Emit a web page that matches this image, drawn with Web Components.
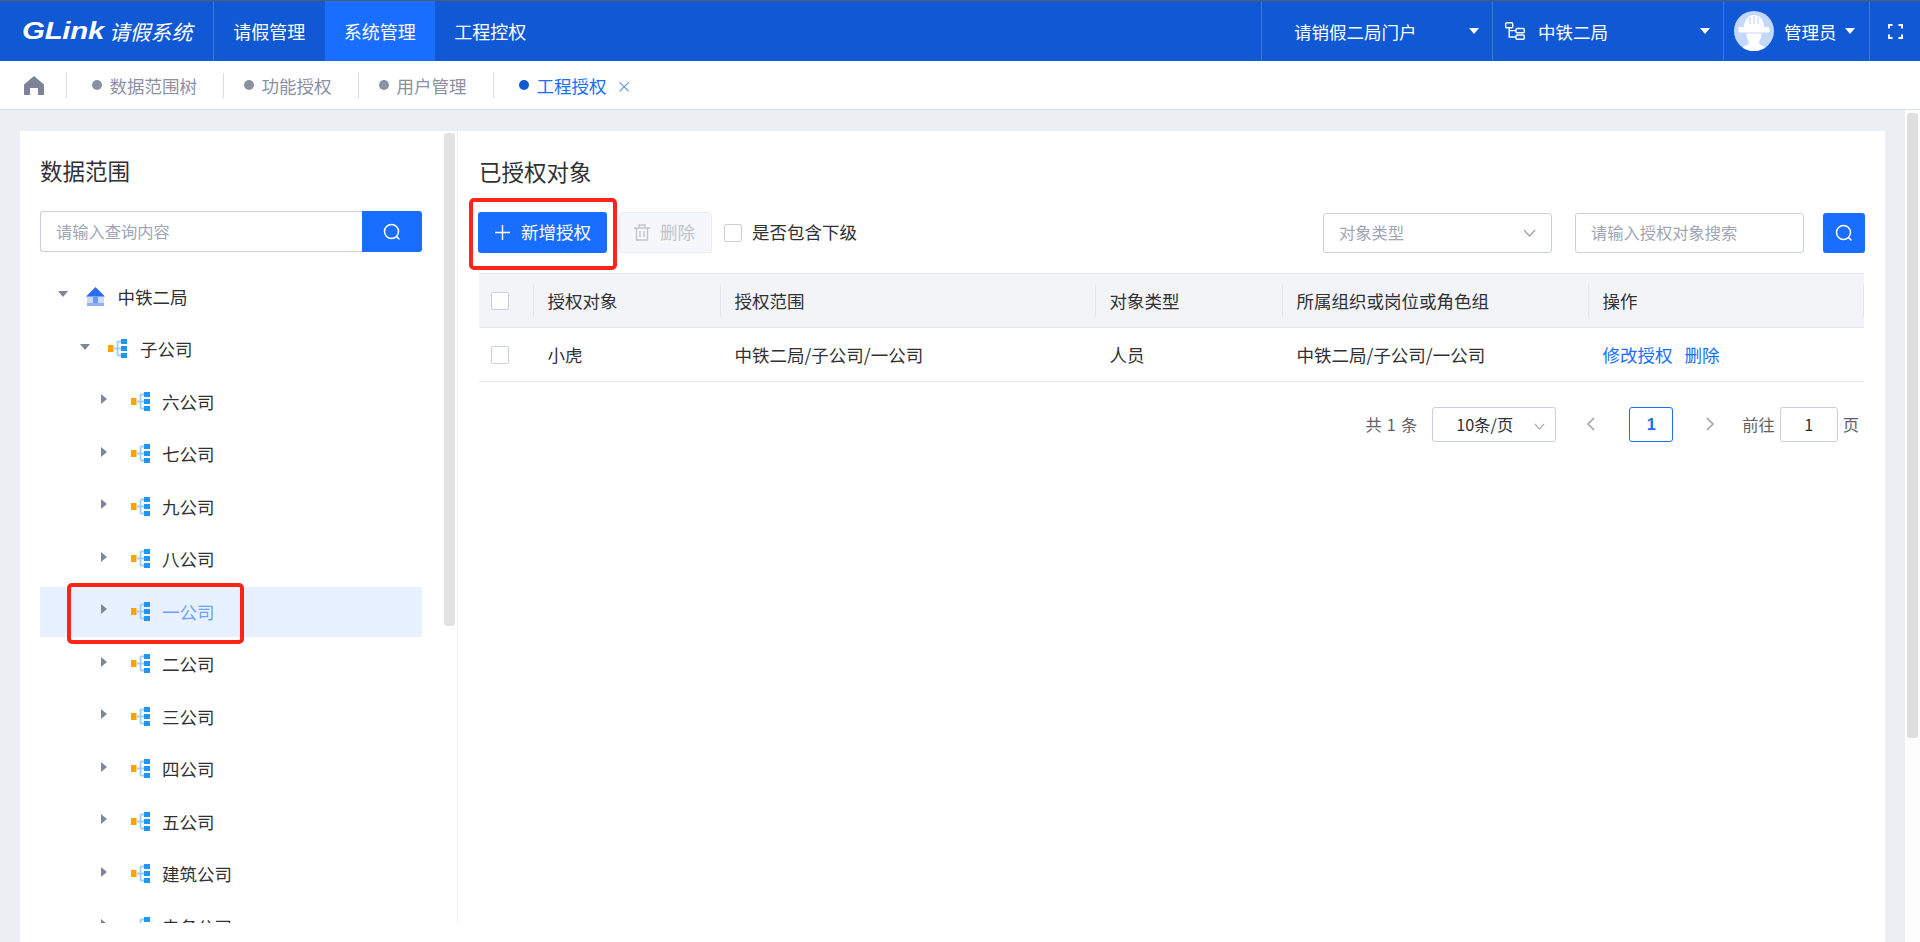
<!DOCTYPE html>
<html lang="zh">
<head>
<meta charset="utf-8">
<title>GLink 请假系统</title>
<style>
    html, body { margin: 0; padding: 0; height: 942px; overflow: hidden; }
    body {
        font-family: "Noto Sans CJK SC", "Noto Sans", sans-serif;
        font-size: 17.5px;
        color: #303133;
        background: #ebeff3;
    }
</style>
</head>
<body>
<app-shell>
    <app-header></app-header>
    <tab-bar></tab-bar>
    <page-body>
        <main-card>
            <scope-pane slot="left"></scope-pane>
            <grant-pane slot="right"></grant-pane>
        </main-card>
    </page-body>
</app-shell>

<script>
const ORG_ICON = `<svg width="19" height="19" viewBox="0 0 19 19">
    <path d="M6 9.5H13M9.5 2.5V16.5M9.5 2.5H13M9.5 16.5H13" fill="none" stroke="#9ccfff" stroke-width="1.8"/>
    <rect x="0" y="6" width="5.5" height="7" fill="#ffa200"/>
    <rect x="13" y="0" width="6" height="5" fill="#1f96fb"/>
    <rect x="13" y="7" width="6" height="5" fill="#1f96fb"/>
    <rect x="13" y="14" width="6" height="5" fill="#1f96fb"/>
</svg>`;

const HOME_ICON = `<svg width="19" height="19" viewBox="0 0 19 19">
    <rect x="1" y="9" width="17" height="10" fill="#cddbfb"/>
    <rect x="7" y="10" width="5" height="7" fill="#6f98f4"/>
    <rect x="1" y="16" width="17" height="3" fill="#8fb0f7"/>
    <path d="M9.5 0L19 9.5H0Z" fill="#2a6cf0"/>
</svg>`;

const SEARCH_ICON = `<svg width="18" height="18" viewBox="0 0 18 18" fill="none" stroke="#fff" stroke-width="1.5">
    <circle cx="8.5" cy="8.5" r="7"/><path d="M13.6 13.6L16 16" stroke-linecap="round"/>
</svg>`;

const CHEVRON_DOWN = `<svg width="13" height="8" viewBox="0 0 13 8" fill="none" stroke="#9aa0ae" stroke-width="1.2"><path d="M1 1L6.5 7L12 1"/></svg>`;

class AppShell extends HTMLElement {
    constructor() {
        super();
        this.attachShadow({ mode: 'open' });
        this.shadowRoot.innerHTML = `
            <style>
                :host { display: flex; flex-direction: column; height: 942px; overflow: hidden; position: relative; }
            </style>
            <slot></slot>
        `;
    }
}

class AppHeader extends HTMLElement {
    constructor() {
        super();
        this.attachShadow({ mode: 'open' });
        const caret = '<span class="caret"></span>';
        this.shadowRoot.innerHTML = `
            <style>
                :host { display: flex; height: 60px; flex: none; background: #1158d4; color: #fff; border-top: 1px solid #555a66; font-size: 17.5px; }
                .logo { width: 191px; padding-left: 22px; border-right: 1px solid #3f78dc; display: flex; align-items: center; white-space: nowrap; }
                .logo b { font: italic 900 24.5px "Liberation Sans", sans-serif; display: inline-block; width: 81px; letter-spacing: -.2px; transform: scaleX(1.2); transform-origin: left center; }
                .logo i { font-size: 20.8px; margin-left: 6px; }
                .nav { width: 110.5px; font-size: 18px; display: flex; align-items: center; justify-content: center; }
                .nav.on { background: #1a6eff; }
                .spacer { flex: 1; }
                .cell { display: flex; align-items: center; border-left: 1px solid #3f78dc; white-space: nowrap; box-sizing: border-box; }
                .caret { width: 0; height: 0; border-left: 5.5px solid transparent; border-right: 5.5px solid transparent; border-top: 6.5px solid #fff; }
                .portal { width: 231px; padding-left: 32px; }
                .portal span:first-child { width: 175px; }
                .corp { width: 231px; padding-left: 12px; }
                .corp svg { margin-right: 13px; }
                .corp span:nth-child(2) { width: 162px; }
                .user { width: 146px; padding-left: 10px; }
                .user svg { margin-right: 10px; }
                .user .caret { margin-left: 8px; }
                .full { width: 51px; padding-left: 18px; }
            </style>
            <div class="logo"><b>GLink</b><i>请假系统</i></div>
            <div class="nav">请假管理</div>
            <div class="nav on">系统管理</div>
            <div class="nav">工程控权</div>
            <div class="spacer"></div>
            <div class="cell portal"><span>请销假二局门户</span>${caret}</div>
            <div class="cell corp">
                <svg width="20" height="18" viewBox="0 0 20 18" fill="none" stroke="#fff" stroke-width="1.4">
                    <rect x=".7" y=".7" width="7" height="5" rx="1"/><rect x="11" y="6.5" width="8.3" height="4.2" rx="1"/><rect x="11" y="13" width="8.3" height="4.2" rx="1"/>
                    <path d="M4.2 5.7V15H11M4.2 8.6H11"/>
                </svg>
                <span>中铁二局</span>${caret}
            </div>
            <div class="cell user">
                <svg width="40" height="40" viewBox="0 0 40 40">
                    <clipPath id="round"><circle cx="20" cy="20" r="20"/></clipPath>
                    <circle cx="20" cy="20" r="20" fill="#c4d8fd"/>
                    <g clip-path="url(#round)" fill="#fff">
                        <path d="M10 16C10 9 14 4 20 4C26 4 30 9 30 16Z"/>
                        <rect x="4.5" y="16" width="31" height="5.5" rx="1.5"/>
                        <path d="M12.5 22.5H27.5C27.5 28 25 30 25 32C25 34 32 35 34 40H6C8 35 15 34 15 32C15 30 12.5 28 12.5 22.5Z"/>
                    </g>
                    <path d="M16 6V13M20 5V13M24 6V13" stroke="#c4d8fd" stroke-width="1.2"/>
                </svg>
                <span>管理员</span>${caret}
            </div>
            <div class="cell full">
                <svg width="15" height="15" viewBox="0 0 15 15" fill="none" stroke="#fff" stroke-width="2">
                    <path d="M1 4.5V1H4.5M10.5 1H14V4.5M14 10.5V14H10.5M4.5 14H1V10.5"/>
                </svg>
            </div>
        `;
    }
}

class TabBar extends HTMLElement {
    constructor() {
        super();
        this.attachShadow({ mode: 'open' });
        const tabs = [
            { label: '数据范围树', width: 157, pad: 25 },
            { label: '功能授权', width: 135, pad: 20 },
            { label: '用户管理', width: 135, pad: 20 },
            { label: '工程授权', pad: 25, active: true }
        ];
        this.shadowRoot.innerHTML = `
            <style>
                :host { display: flex; align-items: center; height: 48px; flex: none; background: #fff; border-bottom: 1px solid #d8dce5; color: #8a91a3; font-size: 17.5px; white-space: nowrap; }
                .home { width: 66px; padding-left: 24px; box-sizing: border-box; display: flex; }
                .tab { display: flex; align-items: center; height: 25px; border-left: 1px solid #d8dce5; box-sizing: border-box; }
                .dot { width: 10px; height: 10px; border-radius: 50%; background: #8a91a3; margin-right: 7.5px; }
                .tab.on { color: #1a6eff; }
                .tab.on .dot { background: #1158d4; }
                .x { margin-left: 10px; font-size: 15px; color: #5d8de6; }
            </style>
            <div class="home">
                <svg width="20" height="19" viewBox="0 0 20 19"><path d="M10 0L20 8.5V19H14V12H6V19H0V8.5Z" fill="#7d8497"/></svg>
            </div>
            ${tabs.map(t => `
                <div class="tab ${t.active ? 'on' : ''}" style="padding-left:${t.pad}px;${t.width ? `width:${t.width}px` : ''}">
                    <span class="dot"></span><span>${t.label}</span>${t.active ? '<span class="x">×</span>' : ''}
                </div>
            `).join('')}
        `;
    }
}

class PageBody extends HTMLElement {
    constructor() {
        super();
        this.attachShadow({ mode: 'open' });
        this.shadowRoot.innerHTML = `
            <style>
                :host { display: flex; flex: 1; min-height: 0; }
                .content { flex: 1; padding: 21px 20px 0; min-width: 0; display: flex; }
                .bar { width: 15px; flex: none; background: #fdfdfd; box-sizing: border-box; padding: 3px 2px 0; }
                .thumb { height: 625px; background: #dedede; border-radius: 3px; }
            </style>
            <div class="content"><slot></slot></div>
            <div class="bar"><div class="thumb"></div></div>
        `;
    }
}

class MainCard extends HTMLElement {
    constructor() {
        super();
        this.attachShadow({ mode: 'open' });
        this.shadowRoot.innerHTML = `
            <style>
                :host { display: flex; flex: 1; background: #fff; min-width: 0; align-items: flex-start; }
            </style>
            <slot name="left"></slot>
            <slot name="right"></slot>
        `;
    }
}

class TreeRow extends HTMLElement {
    constructor() {
        super();
        this.attachShadow({ mode: 'open' });
    }

    connectedCallback() {
        const level = Number(this.getAttribute('level') || 0);
        const open = this.hasAttribute('open');
        const active = this.hasAttribute('active');
        this.shadowRoot.innerHTML = `
            <style>
                :host { display: flex; align-items: center; height: 52.5px; flex: none; }
                .row { flex: 1; height: 50px; display: flex; align-items: center; box-sizing: border-box; padding: 0 0 2px ${16 + level * 22}px; }
                .row.on { background: #e7f1ff; color: #6ba2fb; }
                .arrow { width: ${level === 2 ? 31 : 30}px; flex: none; display: flex; transform: translateY(-2px); }
                .down { margin-left: 2px; width: 0; height: 0; border-left: 5px solid transparent; border-right: 5px solid transparent; border-top: 6px solid #808797; }
                .right { margin-left: 1px; width: 0; height: 0; border-top: 5px solid transparent; border-bottom: 5px solid transparent; border-left: 6.5px solid #808797; }
                svg { flex: none; margin-right: ${level === 0 ? 12.5 : level === 1 ? 13 : 12}px; }
            </style>
            <div class="row ${active ? 'on' : ''}">
                <span class="arrow"><span class="${open ? 'down' : 'right'}"></span></span>
                ${level === 0 ? HOME_ICON : ORG_ICON}
                <slot></slot>
            </div>
        `;
    }
}

class ScopePane extends HTMLElement {
    constructor() {
        super();
        this.attachShadow({ mode: 'open' });
        const names = ['六公司', '七公司', '九公司', '八公司', '一公司', '二公司', '三公司', '四公司', '五公司', '建筑公司', '电务公司'];
        this.shadowRoot.innerHTML = `
            <style>
                :host { display: block; position: relative; width: 438px; height: 792px; flex: none; box-sizing: border-box; padding: 24px 35px 0 20px; border-right: 1px solid #f0f0f0; overflow: hidden; }
                h2 { margin: 0; font-size: 22.5px; font-weight: 400; line-height: 30px; color: #303133; }
                .search { display: flex; height: 41px; margin: 26px 0 19px; }
                .search div { flex: 1; box-sizing: border-box; border: 1px solid #c9cfdc; border-right: 0; border-radius: 3px 0 0 3px; padding-left: 15px; color: #a0a6b5; font-size: 16.25px; line-height: 38px; }
                .search button { width: 60px; border: 0; padding: 0; background: #1a6eff; border-radius: 0 3px 3px 0; display: flex; align-items: center; justify-content: center; }
                .thumb { position: absolute; left: 424px; top: 2px; width: 11px; height: 493px; background: #e2e2e2; border-radius: 3px; }
            </style>
            <h2>数据范围</h2>
            <div class="search"><div>请输入查询内容</div><button>${SEARCH_ICON}</button></div>
            <tree-row level="0" open>中铁二局</tree-row>
            <tree-row level="1" open>子公司</tree-row>
            ${names.map(n => `<tree-row level="2" ${n === '一公司' ? 'active' : ''}>${n}</tree-row>`).join('')}
            <div class="thumb"></div>
        `;
    }
}

class CheckBox extends HTMLElement {
    constructor() {
        super();
        this.attachShadow({ mode: 'open' });
        this.shadowRoot.innerHTML = `
            <style>
                :host { display: block; width: 18px; height: 18px; box-sizing: border-box; border: 1px solid #c9cfdc; border-radius: 2px; background: #fff; flex: none; }
            </style>
        `;
    }
}

class GrantPane extends HTMLElement {
    constructor() {
        super();
        this.attachShadow({ mode: 'open' });
        this.shadowRoot.innerHTML = `
            <style>
                :host { display: block; flex: 1; min-width: 0; box-sizing: border-box; padding: 25px 20px 0 21px; font-size: 17.5px; }
                h2 { margin: 0; font-size: 22.5px; font-weight: 400; line-height: 30px; color: #303133; }
                .tools { display: flex; align-items: center; height: 41px; margin: 26px 0 20px -1px; white-space: nowrap; }
                .t { margin-bottom: 2px; }
                .btn { height: 41px; box-sizing: border-box; border-radius: 3px; display: flex; align-items: center; }
                .add { width: 129px; background: #1a6eff; color: #fff; padding-left: 17px; }
                .add svg { margin-right: 11px; }
                .del { width: 93px; margin-left: 12px; background: #f5f7fa; border: 1px solid #e9ecf2; color: #c0c4cc; padding-left: 14px; }
                .del svg { margin-right: 10px; }
                .chk { display: flex; align-items: center; gap: 10px; margin-left: 12px; }
                .spacer { flex: 1; }
                .field { height: 40px; box-sizing: border-box; width: 229px; border: 1px solid #c9cfdc; border-radius: 3px; display: flex; align-items: center; justify-content: space-between; padding: 0 15px; font-size: 16.25px; color: #a0a6b5; }
                .field + .field { margin-left: 23px; }
                .go { width: 42px; height: 40px; margin-left: 19px; border: 0; padding: 0; background: #1a6eff; border-radius: 3px; display: flex; align-items: center; justify-content: center; }
                .grid { display: grid; grid-template-columns: 55px 187px 375px 187px 306px 275px; width: 1385px; }
                .th, .td { box-sizing: border-box; display: flex; align-items: center; padding-left: 13.5px; }
                .th { height: 55px; background: #f2f4f8; border-top: 1px solid #e4e7ed; border-bottom: 1px solid #e4e7ed; position: relative; }
                .th::after { content: ''; position: absolute; right: 0; top: 10px; bottom: 10px; width: 1px; background: #e4e7ed; }
                .td { height: 54px; border-bottom: 1px solid #e4e7ed; }
                .th.box, .td.box { padding-left: 12px; }
                a { color: #1a6eff; text-decoration: none; margin-right: 12px; }
                .pager { display: flex; align-items: center; justify-content: flex-end; margin-top: 24px; padding-right: 6px; font-size: 16.25px; color: #606266; white-space: nowrap; height: 36px; }
                .total { word-spacing: 1.5px; }
                .size { width: 124px; height: 35px; box-sizing: border-box; margin-left: 15px; border: 1px solid #c9cfdc; border-radius: 3px; display: flex; align-items: center; justify-content: space-between; padding: 0 10px 0 23px; color: #303133; }
                .size svg { margin-top: 4px; width: 11px; height: 7px; }
                .arrow { margin-left: 30px; display: flex; }
                .num { width: 44px; height: 35px; box-sizing: border-box; margin-left: 34px; border: 1px solid #1a6eff; border-radius: 3px; display: flex; align-items: center; justify-content: center; color: #1a6eff; font-weight: 700; font-family: "Liberation Sans", sans-serif; }
                .next { margin-left: 33px; margin-right: 27px; display: flex; }
                .jump { width: 58px; height: 35px; box-sizing: border-box; margin: 0 5px; border: 1px solid #c9cfdc; border-radius: 3px; display: flex; align-items: center; justify-content: center; color: #303133; }
            </style>
            <h2>已授权对象</h2>
            <div class="tools">
                <div class="btn add">
                    <svg width="15" height="15" viewBox="0 0 15 15" stroke="#fff" stroke-width="1.4"><path d="M7.5 0V15M0 7.5H15"/></svg>
                    <span class="t">新增授权</span>
                </div>
                <div class="btn del">
                    <svg width="16" height="17" viewBox="0 0 16 17" fill="none" stroke="#c0c4cc" stroke-width="1.4">
                        <path d="M0 4H16M5 4V1H11V4M2.5 4V16H13.5V4M6 7V13M10 7V13"/>
                    </svg>
                    <span class="t">删除</span>
                </div>
                <div class="chk"><check-box></check-box><span class="t">是否包含下级</span></div>
                <div class="spacer"></div>
                <div class="field"><span class="t">对象类型</span>${CHEVRON_DOWN}</div>
                <div class="field"><span class="t">请输入授权对象搜索</span></div>
                <button class="go">${SEARCH_ICON}</button>
            </div>
            <div class="grid">
                <div class="th box"><check-box></check-box></div>
                <div class="th">授权对象</div>
                <div class="th">授权范围</div>
                <div class="th">对象类型</div>
                <div class="th">所属组织或岗位或角色组</div>
                <div class="th">操作</div>
                <div class="td box"><check-box></check-box></div>
                <div class="td">小虎</div>
                <div class="td">中铁二局/子公司/一公司</div>
                <div class="td">人员</div>
                <div class="td">中铁二局/子公司/一公司</div>
                <div class="td"><a>修改授权</a><a>删除</a></div>
            </div>
            <div class="pager">
                <span class="total">共 1 条</span>
                <div class="size">10条/页${CHEVRON_DOWN}</div>
                <span class="arrow"><svg width="9" height="14" viewBox="0 0 9 14" fill="none" stroke="#9aa0ae" stroke-width="1.5"><path d="M8 1L2 7L8 13"/></svg></span>
                <div class="num">1</div>
                <span class="next"><svg width="9" height="14" viewBox="0 0 9 14" fill="none" stroke="#9aa0ae" stroke-width="1.5"><path d="M1 1L7 7L1 13"/></svg></span>
                <span>前往</span>
                <div class="jump">1</div>
                <span>页</span>
            </div>
        `;
    }
}

class MarkBox extends HTMLElement {
    constructor() {
        super();
        this.attachShadow({ mode: 'open' });
        this.shadowRoot.innerHTML = `
            <style>
                :host { display: block; position: absolute; box-sizing: border-box; border: 4px solid #ff2418; border-radius: 5px; pointer-events: none; }
            </style>
        `;
    }
}

customElements.define('app-shell', AppShell);
customElements.define('app-header', AppHeader);
customElements.define('tab-bar', TabBar);
customElements.define('page-body', PageBody);
customElements.define('main-card', MainCard);
customElements.define('tree-row', TreeRow);
customElements.define('scope-pane', ScopePane);
customElements.define('check-box', CheckBox);
customElements.define('grant-pane', GrantPane);
customElements.define('mark-box', MarkBox);

// the two red annotation frames lie over the page
[[67, 583, 177, 61], [469, 198, 148, 72]].forEach(([x, y, w, h]) => {
    const mark = document.createElement('mark-box');
    mark.style.cssText = `left:${x}px;top:${y}px;width:${w}px;height:${h}px`;
    document.querySelector('app-shell').appendChild(mark);
});
</script>
</body>
</html>
